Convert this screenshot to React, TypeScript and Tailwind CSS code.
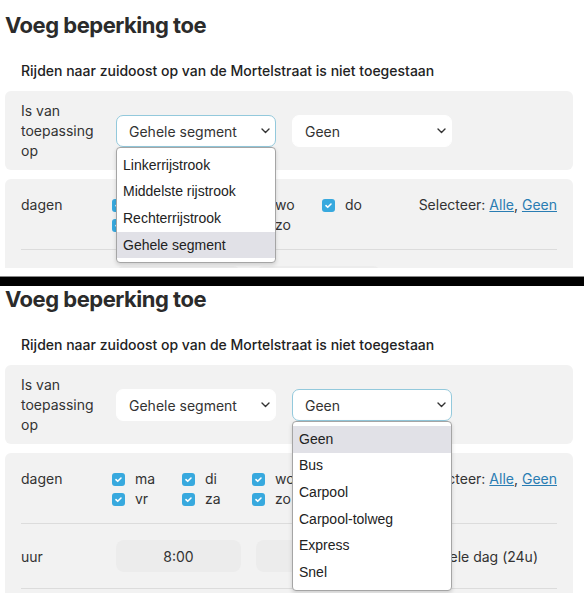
import React from "react";

const days = ["ma", "di", "wo", "do", "vr", "za", "zo"];
const laneOptions = ["Linkerrijstrook", "Middelste rijstrook", "Rechterrijstrook", "Gehele segment"];
const vehicleOptions = ["Geen", "Bus", "Carpool", "Carpool-tolweg", "Express", "Snel"];

function Chevron() {
  return (
    <svg width="9" height="6" viewBox="0 0 9 6" fill="none" className="shrink-0">
      <path d="M1 1l3.5 3.5L8 1" stroke="#333" strokeWidth="1.4" strokeLinecap="round" strokeLinejoin="round" />
    </svg>
  );
}

function Check({ checked = true }: { checked?: boolean }) {
  if (!checked) {
    return <span className="block h-[13px] w-[13px] shrink-0 rounded-[3px] border border-[#8a8a8a] bg-white" />;
  }
  return (
    <span className="flex h-[13px] w-[13px] shrink-0 items-center justify-center rounded-[3px] bg-[#38a9de]">
      <svg width="9" height="9" viewBox="0 0 9 9" fill="none">
        <path d="M2 4.6l1.7 1.7L7 3" stroke="white" strokeWidth="1.6" strokeLinecap="round" strokeLinejoin="round" />
      </svg>
    </span>
  );
}

function Select({ value, focused, options, active }: { value: string; focused: boolean; options?: string[]; active?: string }) {
  return (
    <div className="relative w-[160px]">
      <div
        className={`flex h-8 items-center justify-between rounded-[7px] bg-white pl-3 pr-[5px] ${
          focused ? "border border-[#93c9dc]" : "border border-white"
        }`}
      >
        <span>{value}</span>
        <Chevron />
      </div>
      {options && (
        <div className="absolute left-0 top-8 z-10 w-[160px] rounded-[4px] border border-[#a5a5a5] bg-white py-1 font-['Liberation_Sans',Arial,sans-serif] text-[14px] text-[#222] shadow-[0_2px_4px_rgba(0,0,0,0.15)]">
          {options.map((o) => (
            <div key={o} className={`flex h-[26.6px] items-center px-[6px] ${o === active ? "bg-[#e1e1e7]" : ""}`}>
              {o}
            </div>
          ))}
        </div>
      )}
    </div>
  );
}

function Screen({ open }: { open: "lane" | "vehicle" }) {
  const showTime = open === "vehicle";
  return (
    <div className="pl-[5px] pr-[11px] font-['Inter',sans-serif] text-[14px] text-[#333]">
      <h1 className="pt-[11px] text-[22px] font-bold leading-[28px] tracking-[-0.5px] text-[#2b2b2b]">
        Voeg beperking toe
      </h1>
      <p className="mt-[22px] pl-4 text-[14px] font-medium leading-5 text-[#222]">
        Rijden naar zuidoost op van de Mortelstraat is niet toegestaan
      </p>

      <div className="mt-[10px] flex items-center gap-4 rounded-md bg-[#f2f2f2] px-4 pb-[9px] pt-[10px]">
        <div className="w-[79px] leading-5">
          Is van
          <br />
          toepassing
          <br />
          op
        </div>
        <Select
          value="Gehele segment"
          focused={open === "lane"}
          options={open === "lane" ? laneOptions : undefined}
          active="Gehele segment"
        />
        <Select
          value="Geen"
          focused={open === "vehicle"}
          options={open === "vehicle" ? vehicleOptions : undefined}
          active="Geen"
        />
      </div>

      <div className="mt-[9px] rounded-md bg-[#f2f2f2] px-4">
        <div className="flex items-start gap-4 border-b border-[#dcdcdc] pb-[14px] pt-4">
          <div className="w-[75px] leading-5">dagen</div>
          <div className="grid grid-cols-[repeat(4,70px)] leading-5">
            {days.map((d) => (
              <label key={d} className="flex h-5 items-center gap-[10px]">
                <Check />
                <span>{d}</span>
              </label>
            ))}
          </div>
          <div className="ml-auto leading-5">
            Selecteer:{" "}
            <a href="#" className="text-[#2a7db3] underline">
              Alle
            </a>
            ,{" "}
            <a href="#" className="text-[#2a7db3] underline">
              Geen
            </a>
          </div>
        </div>

        <div className="flex items-center gap-4 border-b border-[#dcdcdc] py-4">
          <div className="w-[79px]">{showTime ? "uur" : ""}</div>
          <div className="flex h-8 w-[125px] items-center justify-center rounded-lg bg-[#ececec]">
            {showTime ? "8:00" : ""}
          </div>
          <div className="-ml-[1px] h-8 w-[125px] rounded-lg bg-[#ececec]" />
          {showTime && (
            <label className="ml-auto mr-[19px] flex items-center gap-[10px]">
              <Check checked={false} />
              <span>Hele dag (24u)</span>
            </label>
          )}
        </div>
        <div className="h-4" />
      </div>
    </div>
  );
}

export default function App() {
  return (
    <div className="h-[593px] w-[584px] overflow-hidden bg-white">
      <div className="h-[268px] overflow-hidden">
        <Screen open="lane" />
      </div>
      <div className="h-[8px] bg-white" />
      <div className="h-[10px] border-t border-[#888] bg-black" />
      <div className="h-[307px] overflow-hidden">
        <div className="-mt-[12px]">
          <Screen open="vehicle" />
        </div>
      </div>
    </div>
  );
}
